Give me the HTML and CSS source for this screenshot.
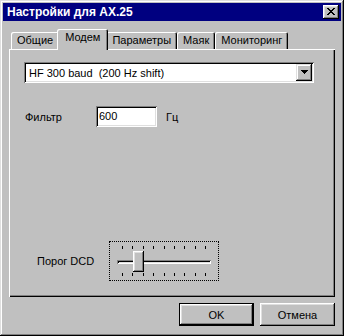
FILE: index.html
```html
<!DOCTYPE html>
<html lang="ru">
<head>
    <meta charset="UTF-8">
    <title>Настройки для AX.25</title>
    <link rel="stylesheet" href="styles.css">
</head>
<body>
    <div class="window">
        <div class="titlebar">
            <span class="title">Настройки для AX.25</span>
            <span class="close">
                <svg width="8" height="7" viewBox="0 0 8 7" shape-rendering="crispEdges">
                    <path fill="#000" d="M0 0h2v1h-2z M6 0h2v1h-2z M1 1h2v1h-2z M5 1h2v1h-2z M2 2h4v1h-4z M3 3h2v1h-2z M2 4h4v1h-4z M1 5h2v1h-2z M5 5h2v1h-2z M0 6h2v1h-2z M6 6h2v1h-2z"/>
                </svg>
            </span>
        </div>

        <div class="content">
            <div class="tabs">
                <div class="tab">Общие</div>
                <div class="tab active">Модем</div>
                <div class="tab">Параметры</div>
                <div class="tab">Маяк</div>
                <div class="tab">Мониторинг</div>
            </div>

            <div class="panel">
                <!-- тип модема -->
                <div class="combo">
                    <span class="combo-text">HF 300 baud  (200 Hz shift)</span>
                    <span class="combo-btn">
                        <svg width="7" height="4" viewBox="0 0 7 4" shape-rendering="crispEdges">
                            <path fill="#000" d="M0 0h7v1h-7z M1 1h5v1h-5z M2 2h3v1h-3z M3 3h1v1h-1z"/>
                        </svg>
                    </span>
                </div>

                <div class="field-row">
                    <span class="label">Фильтр</span>
                    <span class="edit">600</span>
                    <span class="unit">Гц</span>
                </div>

                <div class="slider-row">
                    <span class="slider-label">Порог DCD</span>
                    <div class="slider">
                        <div class="ticks">
                            <i></i><i></i><i></i><i></i><i></i><i></i><i></i><i></i><i></i>
                        </div>
                        <div class="track-area">
                            <div class="track"></div>
                            <div class="thumb" style="left: 16px"></div>
                        </div>
                        <div class="ticks">
                            <i></i><i></i><i></i><i></i><i></i><i></i><i></i><i></i><i></i>
                        </div>
                    </div>
                </div>
            </div>

            <div class="buttons">
                <div class="btn default">OK</div>
                <div class="btn">Отмена</div>
            </div>
        </div>
    </div>
</body>
</html>
```

FILE: styles.css
```css
body {
    margin: 0;
    background-color: #c0c0c0;
    font-family: "Liberation Sans", Arial, sans-serif;
    font-size: 11px;
    color: #000;
}
.window {
    width: 344px;
    height: 336px;
    box-sizing: border-box;
    padding: 3px;
    background-color: #c0c0c0;
    box-shadow: inset -1px -1px #000, inset 1px 1px #dfdfdf, inset -2px -2px #808080, inset 2px 2px #fff;
    display: flex;
    flex-direction: column;
}
.titlebar {
    height: 18px;
    background-color: #000080;
    color: #fff;
    display: flex;
    align-items: center;
    justify-content: space-between;
    padding: 0 2px 0 4px;
}
.title {
    font-size: 12px;
    font-weight: bold;
}
.close {
    width: 16px;
    height: 14px;
    box-sizing: border-box;
    background-color: #c0c0c0;
    box-shadow: inset -1px -1px #000, inset 1px 1px #fff, inset -2px -2px #808080, inset 2px 2px #dfdfdf;
    display: flex;
    align-items: center;
    justify-content: center;
    padding: 0 1px 1px 0;
}
.close svg {
    display: block;
}
.content {
    padding: 8px 6px 0 6px;
    display: flex;
    flex-direction: column;
}
.tabs {
    display: flex;
    align-items: flex-end;
    padding-left: 2px;
    height: 20px;
}
.tab {
    height: 17px;
    box-sizing: border-box;
    padding: 2px 6px 0 6px;
    line-height: 13px;
    border-radius: 2px 2px 0 0;
    box-shadow: inset 1px 1px #fff, inset -1px 0 #000, inset -2px 0 #808080;
}
.tab.active {
    position: relative;
    z-index: 1;
    height: 21px;
    padding: 2px 8px 0 8px;
    margin: 0 -2px -1px -2px;
    background-color: #c0c0c0;
}
.panel {
    height: 248px;
    box-sizing: border-box;
    padding: 13px 20px 0 15px;
    box-shadow: inset 1px 1px #fff, inset -1px -1px #000, inset -2px -2px #808080;
    display: flex;
    flex-direction: column;
}
.combo {
    width: 290px;
    height: 21px;
    box-sizing: border-box;
    background-color: #fff;
    box-shadow: inset 1px 1px #808080, inset -1px -1px #fff, inset 2px 2px #000, inset -2px -2px #dfdfdf;
    display: flex;
    align-items: center;
    justify-content: space-between;
    padding: 2px 2px 2px 5px;
}
.combo-text {
    white-space: pre;
}
.combo-btn {
    width: 16px;
    height: 17px;
    box-sizing: border-box;
    background-color: #c0c0c0;
    box-shadow: inset -1px -1px #000, inset 1px 1px #dfdfdf, inset -2px -2px #808080, inset 2px 2px #fff;
    display: flex;
    align-items: center;
    justify-content: center;
    padding-bottom: 1px;
}
.combo-btn svg {
    display: block;
}
.field-row {
    display: flex;
    align-items: center;
    margin-top: 23px;
    padding-left: 1px;
}
.label {
    width: 71px;
}
.edit {
    width: 61px;
    height: 21px;
    box-sizing: border-box;
    background-color: #fff;
    box-shadow: inset 1px 1px #808080, inset -1px -1px #fff, inset 2px 2px #000, inset -2px -2px #dfdfdf;
    padding: 3px 3px 0 3px;
    line-height: 14px;
}
.unit {
    margin-left: 9px;
}
.slider-row {
    display: flex;
    align-items: center;
    margin-top: 114px;
    padding-left: 13px;
}
.slider-label {
    width: 72px;
}
.slider {
    width: 110px;
    height: 40px;
    box-sizing: border-box;
    border: 1px dotted #000;
    padding: 4px 7px 0 7px;
}
.ticks {
    height: 4px;
    margin: 0 5px;
    display: flex;
    justify-content: space-between;
}
.ticks i {
    width: 1px;
    height: 3px;
    background-color: #000;
}
.ticks:last-child {
    align-items: flex-end;
}
.track-area {
    position: relative;
    height: 21px;
    margin: 1px 0 0 0;
    display: flex;
    align-items: center;
}
.track {
    width: 100%;
    height: 4px;
    box-sizing: border-box;
    background-color: #c0c0c0;
    box-shadow: inset 1px 1px #808080, inset -1px -1px #fff, inset 2px 2px #000, inset -2px -2px #dfdfdf;
}
.thumb {
    position: absolute;
    top: 0;
    width: 11px;
    height: 21px;
    box-sizing: border-box;
    background-color: #c0c0c0;
    box-shadow: inset -1px -1px #000, inset 1px 1px #fff, inset -2px -2px #808080, inset 2px 2px #dfdfdf;
}
.buttons {
    display: flex;
    justify-content: flex-end;
    gap: 6px;
    margin-top: 6px;
}
.btn {
    width: 75px;
    height: 23px;
    box-sizing: border-box;
    display: flex;
    align-items: center;
    justify-content: center;
    box-shadow: inset -1px -1px #000, inset 1px 1px #fff, inset -2px -2px #808080, inset 2px 2px #dfdfdf;
}
.btn.default {
    border: 1px solid #000;
}
```
